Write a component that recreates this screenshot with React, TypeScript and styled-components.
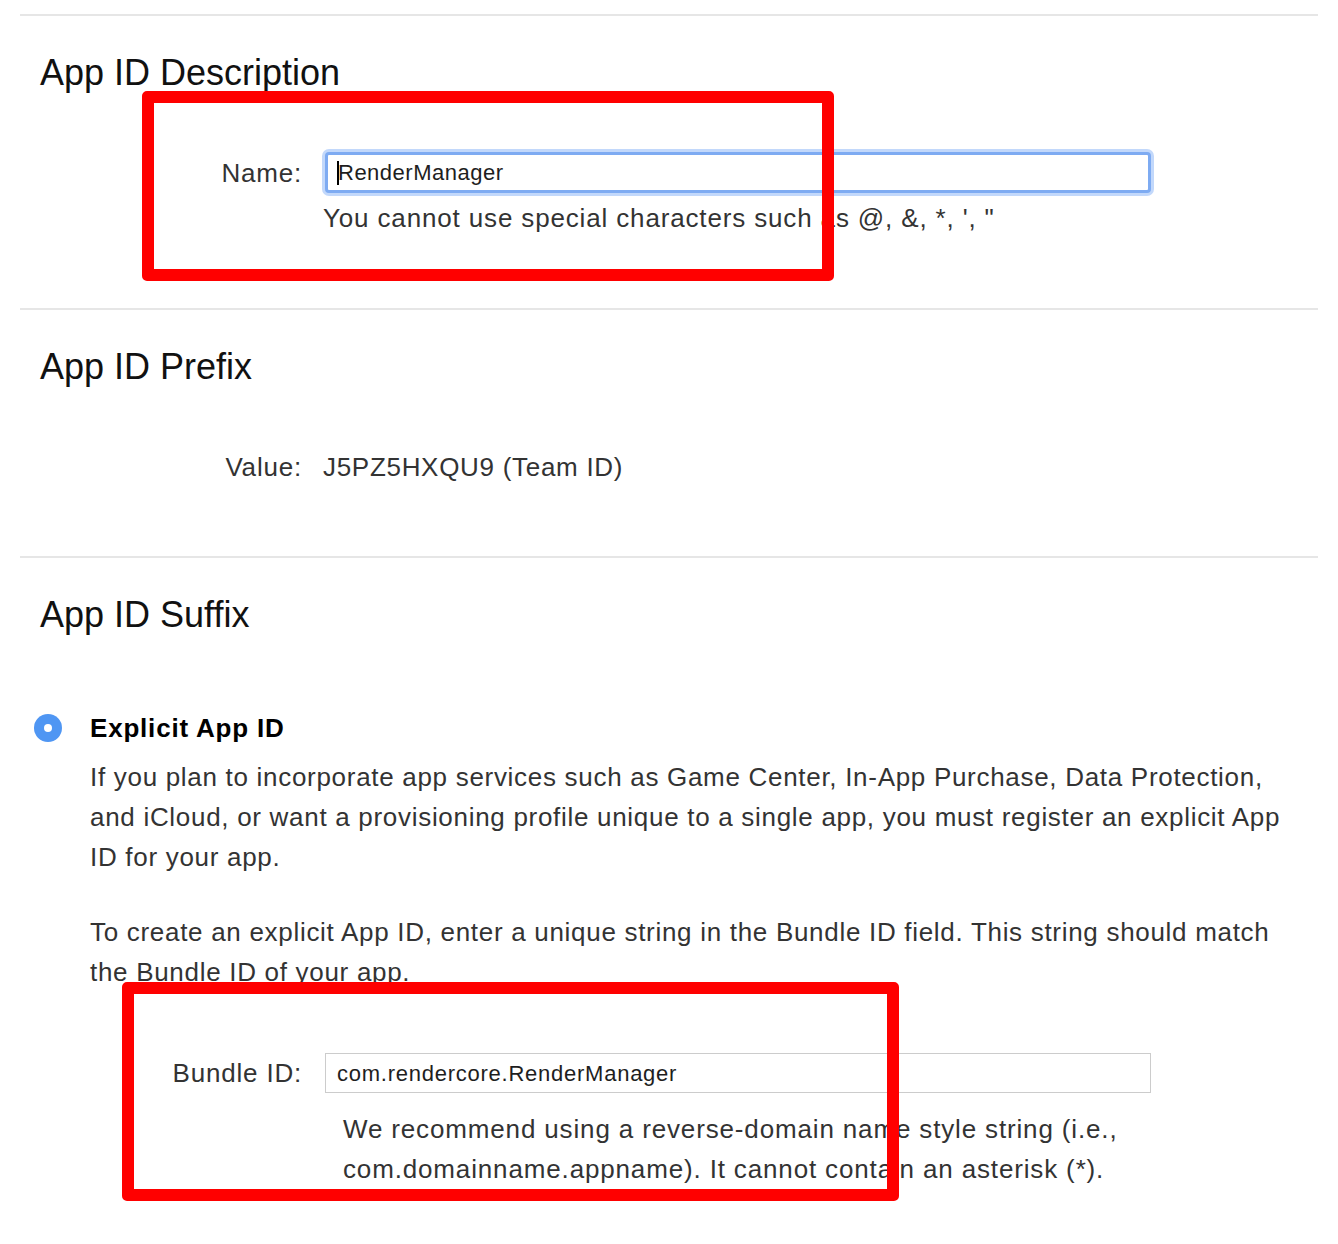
import React from "react";
import styled, { createGlobalStyle } from "styled-components";

const Global = createGlobalStyle`
  html, body { margin: 0; padding: 0; background: #ffffff; }
  body {
    font-family: "Liberation Sans", Arial, Helvetica, sans-serif;
    color: #333333;
    -webkit-font-smoothing: antialiased;
  }
`;

const Page = styled.div`
  position: relative;
  width: 1338px;
  box-sizing: border-box;
  padding: 14px 20px 40px;
`;

const Section = styled.section<{ $bottom: number }>`
  border-top: 2px solid #e6e6e6;
  padding: 35px 18px ${(p) => p.$bottom}px 20px;
`;

const Heading = styled.h2`
  margin: 0;
  font-size: 36px;
  line-height: 44px;
  font-weight: 400;
  color: #111111;
`;

const FieldRow = styled.div<{ $top: number }>`
  display: grid;
  grid-template-columns: 262px 826px;
  column-gap: 23px;
  align-items: center;
  margin-top: ${(p) => p.$top}px;
`;

const Label = styled.div`
  text-align: right;
  font-size: 26px;
  line-height: 30px;
  letter-spacing: 0.8px;
  color: #333333;
`;

const Field = styled.div<{ $focused?: boolean }>`
  box-sizing: border-box;
  display: flex;
  align-items: center;
  height: ${(p) => (p.$focused ? 41 : 40)}px;
  padding-left: ${(p) => (p.$focused ? 9 : 11)}px;
  padding-top: 1px;
  border: ${(p) => (p.$focused ? "3px solid #7eabf2" : "1px solid #cccccc")};
  border-radius: ${(p) => (p.$focused ? 4 : 0)}px;
  box-shadow: ${(p) => (p.$focused ? "0 0 0 3px #c2d8fb" : "none")};
  background: #ffffff;
  font-size: 22px;
  color: #1e1e1e;
  letter-spacing: ${(p) => (p.$focused ? 0.5 : 0.75)}px;
`;

const Caret = styled.span`
  display: inline-block;
  width: 2px;
  height: 24px;
  background: #000000;
  margin-right: -1px;
`;

const Hint = styled.div<{ $top: number; $indent: number }>`
  grid-column: 2;
  margin-top: ${(p) => p.$top}px;
  margin-left: ${(p) => (p.$indent ? 0 : -2)}px;
  padding-left: ${(p) => p.$indent}px;
  font-size: 26px;
  line-height: ${(p) => (p.$indent ? 40 : 30)}px;
  letter-spacing: 0.85px;
  color: #333333;
`;

const Value = styled.div`
  font-size: 26px;
  line-height: 30px;
  letter-spacing: 0.7px;
  color: #333333;
  display: flex;
  gap: 8px;
  margin-left: -2px;
`;

const Option = styled.div`
  display: grid;
  grid-template-columns: 28px 1fr;
  column-gap: 28px;
  margin: 76px 0 0 -6px;
`;

const Radio = styled.span`
  width: 28px;
  height: 28px;
  border-radius: 50%;
  background: #4f96f3;
  display: flex;
  align-items: center;
  justify-content: center;
  align-self: center;
  &::after {
    content: "";
    width: 8px;
    height: 8px;
    border-radius: 50%;
    background: #ffffff;
  }
`;

const OptionTitle = styled.div`
  font-size: 26px;
  line-height: 30px;
  font-weight: 700;
  letter-spacing: 0.8px;
  color: #000000;
`;

const Paragraph = styled.p<{ $top: number }>`
  grid-column: 2;
  margin: ${(p) => p.$top}px 0 0;
  font-size: 26px;
  line-height: 40px;
  letter-spacing: 0.7px;
  color: #333333;
`;

const Highlight = styled.div<{ $x: number; $y: number; $w: number; $h: number }>`
  position: absolute;
  left: ${(p) => p.$x}px;
  top: ${(p) => p.$y}px;
  width: ${(p) => p.$w}px;
  height: ${(p) => p.$h}px;
  box-sizing: border-box;
  border: 12px solid #ff0000;
  border-radius: 5px;
  pointer-events: none;
`;

export default function App() {
  return (
    <>
      <Global />
      <Page>
        <Section $bottom={75}>
          <Heading>App ID Description</Heading>
          <FieldRow $top={57}>
            <Label>Name:</Label>
            <Field $focused>
              <Caret />
              RenderManager
            </Field>
            <Hint $top={10} $indent={0}>
              You cannot use special characters such as @, &amp;, *, ', "
            </Hint>
          </FieldRow>
        </Section>

        <Section $bottom={74}>
          <Heading>App ID Prefix</Heading>
          <FieldRow $top={63}>
            <Label>Value:</Label>
            <Value>
              <span>J5PZ5HXQU9</span>
              <span>(Team ID)</span>
            </Value>
          </FieldRow>
        </Section>

        <Section $bottom={20}>
          <Heading>App ID Suffix</Heading>
          <Option>
            <Radio />
            <OptionTitle>Explicit App ID</OptionTitle>
            <Paragraph $top={14}>
              If you plan to incorporate app services such as Game Center, In-App Purchase, Data Protection,
              and iCloud, or want a provisioning profile unique to a single app, you must register an explicit App
              ID for your app.
            </Paragraph>
            <Paragraph $top={35}>
              To create an explicit App ID, enter a unique string in the Bundle ID field. This string should match
              the Bundle ID of your app.
            </Paragraph>
          </Option>
          <FieldRow $top={61}>
            <Label>Bundle ID:</Label>
            <Field>com.rendercore.RenderManager</Field>
            <Hint $top={16} $indent={18}>
              We recommend using a reverse-domain name style string (i.e., com.domainname.appname). It cannot
              contain an asterisk (*).
            </Hint>
          </FieldRow>
        </Section>

        <Highlight $x={142} $y={91} $w={692} $h={190} />
        <Highlight $x={122} $y={982} $w={777} $h={219} />
      </Page>
    </>
  );
}
